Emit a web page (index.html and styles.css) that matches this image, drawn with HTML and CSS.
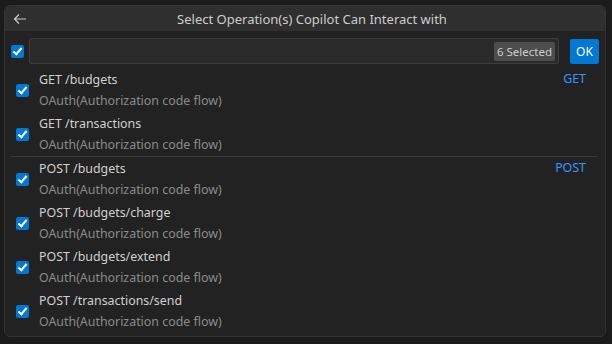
FILE: index.html
```html
<!DOCTYPE html>
<html lang="en">
<head>
    <meta charset="UTF-8">
    <meta name="viewport" content="width=device-width, initial-scale=1.0">
    <title>Select Operations</title>
    <link rel="stylesheet" href="styles.css">
</head>
<body>
    <div class="picker">
        <div class="title-bar">
            <span class="back">
                <svg width="16" height="16" viewBox="0 0 16 16"><path d="M14 8H2.5M7 3.5L2.5 8L7 12.5" fill="none" stroke="#cccccc" stroke-width="1.2"/></svg>
            </span>
            <span class="title">Select Operation(s) Copilot Can Interact with</span>
        </div>

        <div class="input-row">
            <span class="check"></span>
            <div class="input-box">
                <span class="badge">6 Selected</span>
            </div>
            <button class="ok">OK</button>
        </div>

        <div class="list">
            <div class="item">
                <span class="check"></span>
                <div class="texts">
                    <div class="label">GET /budgets</div>
                    <div class="desc">OAuth(Authorization code flow)</div>
                </div>
                <span class="group">GET</span>
            </div>
            <div class="item">
                <span class="check"></span>
                <div class="texts">
                    <div class="label">GET /transactions</div>
                    <div class="desc">OAuth(Authorization code flow)</div>
                </div>
            </div>
            <div class="item first-of-group">
                <span class="check"></span>
                <div class="texts">
                    <div class="label">POST /budgets</div>
                    <div class="desc">OAuth(Authorization code flow)</div>
                </div>
                <span class="group">POST</span>
            </div>
            <div class="item">
                <span class="check"></span>
                <div class="texts">
                    <div class="label">POST /budgets/charge</div>
                    <div class="desc">OAuth(Authorization code flow)</div>
                </div>
            </div>
            <div class="item">
                <span class="check"></span>
                <div class="texts">
                    <div class="label">POST /budgets/extend</div>
                    <div class="desc">OAuth(Authorization code flow)</div>
                </div>
            </div>
            <div class="item">
                <span class="check"></span>
                <div class="texts">
                    <div class="label">POST /transactions/send</div>
                    <div class="desc">OAuth(Authorization code flow)</div>
                </div>
            </div>
        </div>
    </div>
</body>
</html>
```

FILE: styles.css
```css
body {
    margin: 0;
    padding: 5px 6px 5px 4px;
    background: #1b1b1b;
    font-family: "Noto Sans", "Open Sans", sans-serif;
    font-size: 13px;
    color: #cccccc;
}

.picker {
    background: #222222;
    border: 1px solid #333333;
    border-radius: 6px;
    overflow: hidden;
    height: 332px;
    box-sizing: border-box;
}

.title-bar {
    display: flex;
    align-items: center;
    height: 25px;
    background: #2f2f2f;
}

.back {
    display: flex;
    padding-left: 7px;
}

.title {
    flex: 1;
    text-align: center;
    padding-right: 9px;
}

.input-row {
    display: flex;
    align-items: center;
    padding: 7px 6px 0 6px;
    gap: 5px;
}

.input-box {
    flex: 1;
    height: 26px;
    background: #2a2a2a;
    border: 1px solid #3c3c3c;
    border-radius: 2px;
    box-sizing: border-box;
    display: flex;
    align-items: center;
    justify-content: flex-end;
    padding-right: 3px;
}

.badge {
    background: #4d4d4d;
    color: #cccccc;
    font-size: 11.5px;
    padding: 1px 3px;
    border-radius: 2px;
    line-height: 17px;
}

.ok {
    margin-left: 6px;
    height: 25px;
    width: 29px;
    background: #0078d4;
    color: #ffffff;
    border: none;
    border-radius: 2px;
    font-family: inherit;
    font-size: 12px;
    padding: 0;
}

.check {
    width: 13px;
    height: 13px;
    background: #0078d4;
    border-radius: 2px;
    flex: none;
    position: relative;
}

.check::after {
    content: "";
    position: absolute;
    left: 4px;
    top: 1px;
    width: 3px;
    height: 7px;
    border: solid #ffffff;
    border-width: 0 2px 2px 0;
    transform: rotate(40deg);
}

.list {
    padding: 4px 7px 0 6px;
    font-size: 12.4px;
}

.item {
    display: flex;
    align-items: center;
    height: 44px;
    padding-left: 5px;
    gap: 10px;
}

.first-of-group {
    border-top: 1px solid #3a3a3a;
}

.texts {
    flex: 1;
}

.label {
    line-height: 22px;
    color: #d0d0d0;
}

.desc {
    line-height: 20px;
    color: #8b8b8b;
}

.group {
    align-self: flex-start;
    line-height: 22px;
    padding-right: 12px;
    color: #3794ff;
}
```
